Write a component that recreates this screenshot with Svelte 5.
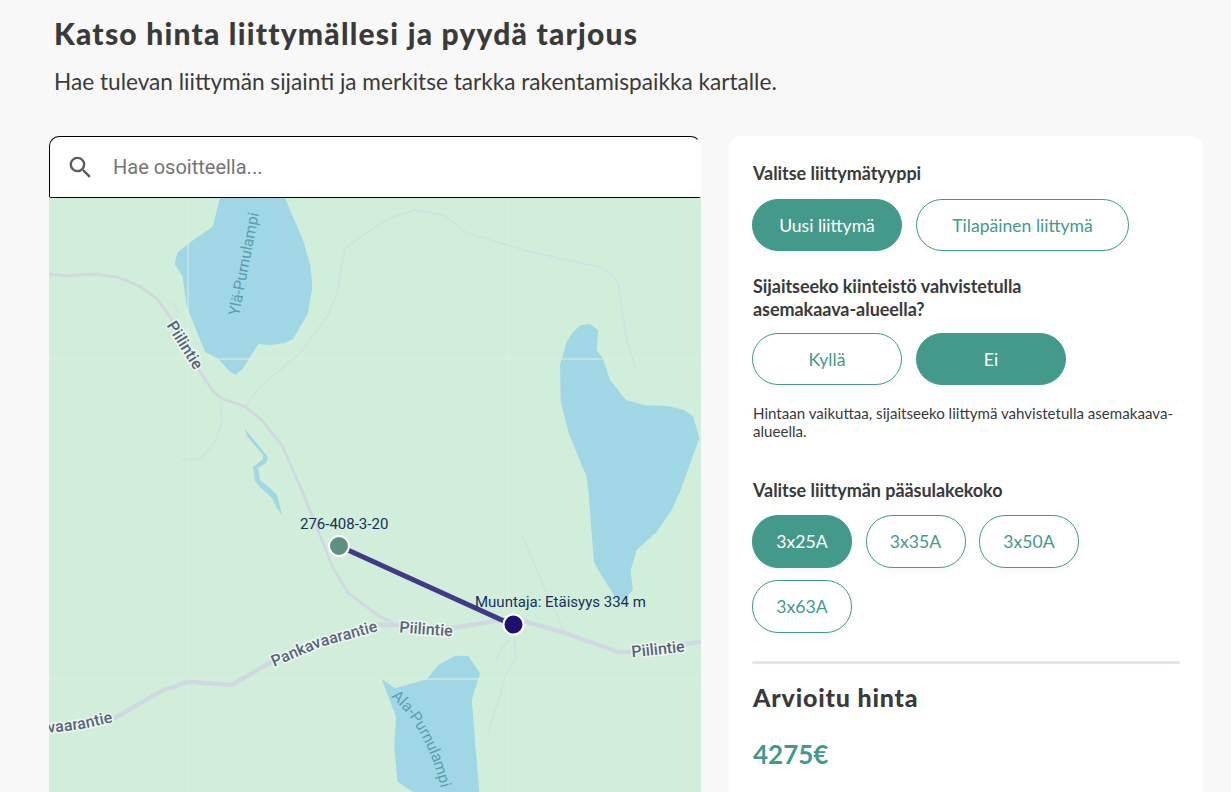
<script>
	let type = $state('Uusi liittymä');
	let zoned = $state('Ei');
	let fuse = $state('3x25A');

	const types = ['Uusi liittymä', 'Tilapäinen liittymä'];
	const zonedOptions = ['Kyllä', 'Ei'];
	const fuses = ['3x25A', '3x35A', '3x50A', '3x63A'];

	const lakes = [
		'M220 198L212.7 226.7L189 243L177.3 252.7L174.7 264L182.7 277L186.7 306.7L205 351.7L218.3 359L230 371.7L236 374.7L243 368.3L258.3 344L270 345L285 343L293 339L307.7 314L312.3 288.3L310.7 266.7L303 240L285 198Z',
		'M560 365L566.7 341.7L573.3 331.7L580.7 325L590 324L598 330L596.7 350L602.7 358.3L610 380L626 400L645 405.3L667.7 406L684.3 410L693.3 416.7L699.3 438.3L680.7 490L671.7 510L656.7 531.7L636.7 550L630.7 570L632.7 590L623 601.7L615 596.7L600 573L594 561.7L588.3 490L586.7 476.7L569.3 435L560.7 401.7Z',
		'M381.7 679L395 688.3L426.7 679.3L438.3 665L455 655.7L468.3 656L480 673.3L471.7 700L479.3 792L413 792L397.3 781.7L394.3 746.7L396 716.7Z',
		'M245 429L268 457L266 463L258 468L260 480L270 488L277 495L282 515L278 510L272 498L262 489L255 481L253 467L263 459L263 455L247 436Z'
	];

	const tracks = [
		'M245 406L261.7 385L300 353.3L328.3 315L336.7 293.3L345 248.3L370 230.7L390 218L415 210L443.3 215L466.7 232.7L530 251.7L600 267.3L612 274L618 283L626 336.7L635.7 369.3',
		'M172.7 300.7L178.3 313.3L175 321.7',
		'M220 400L222.7 420L215 441.7L201 458.3L181.7 460',
		'M514.3 636.7L515.7 658.3L506.7 673.3L487.7 734.3',
		'M511.7 638L500 650L495.7 661.7',
		'M521.7 534L546.7 593.3L565 633'
	];

	const roads = [
		'M49 274L66.7 275.7L93.3 274L118.3 277.3L140 286.7L156.7 298.3L173.3 321.7L196.7 366.7L213.3 391.7L221.7 398.3L245 406.7L261.7 420L281.7 445L301.7 490L323.3 543.3L333.3 568.3L348.3 593.3L380 616.7L396.7 625',
		'M111.7 720L160 691.7L188 681.7L231.7 685L271.7 661.7L320 640L376.7 625L396.7 625L453 628L513 618L565 633L618 652L630 652L701 641.7'
	];
</script>

<main class="page">
	<header class="intro">
		<h1>Katso hinta liittymällesi ja pyydä tarjous</h1>
		<p>Hae tulevan liittymän sijainti ja merkitse tarkka rakentamispaikka kartalle.</p>
	</header>

	<div class="columns">
		<section class="map-col">
			<div class="search">
				<svg class="search-icon" viewBox="0 0 24 24" width="29" height="29" aria-hidden="true">
					<path d="M15.5 14h-.79l-.28-.27A6.471 6.471 0 0 0 16 9.5 6.5 6.5 0 1 0 9.5 16c1.61 0 3.09-.59 4.23-1.57l.27.28v.79l5 4.99L20.49 19l-4.99-5zm-6 0C7.01 14 5 11.99 5 9.5S7.01 5 9.5 5 14 7.01 14 9.5 11.99 14 9.5 14z" />
				</svg>
				<input type="text" placeholder="Hae osoitteella..." />
			</div>

			<svg class="map" viewBox="49 198 652 594" width="652" height="594">
				<defs>
					<path id="pank" d="M274 667L320 647L378 631" />
					<path id="pank2" d="M49 733L82 729L113 722" />
					<path id="ala" d="M391 697Q426 727 441 788" />
				</defs>
				<rect x="49" y="198" width="652" height="594" fill="#d1eedb" />
				{#each lakes as d}
					<path {d} fill="#a0d7e4" />
				{/each}
				<path class="seam" d="M188 198V792M508 198V792M49 359H701M49 679H701" />
				{#each tracks as d}
					<path {d} class="track" />
				{/each}
				<path d={roads[0]} class="road" />
				<path d={roads[1]} class="road wide" />

				<text class="lake-name" transform="translate(244 264) rotate(-79)" text-anchor="middle" dominant-baseline="central">Ylä-Purnulampi</text>
				<text class="lake-name"><textPath href="#ala">Ala-Purnulampi</textPath></text>
				<text class="road-name" transform="translate(185 345) rotate(58)" text-anchor="middle" dominant-baseline="central">Piilintie</text>
				<text class="road-name"><textPath href="#pank">Pankavaarantie</textPath></text>
				<text class="road-name"><textPath href="#pank2" startOffset="100%" text-anchor="end">Pankavaarantie</textPath></text>
				<text class="road-name" transform="translate(426 629) rotate(4)" text-anchor="middle" dominant-baseline="central">Piilintie</text>
				<text class="road-name" transform="translate(658 649) rotate(-6)" text-anchor="middle" dominant-baseline="central">Piilintie</text>

				<line x1="339" y1="546" x2="513" y2="625" class="link" />
				<circle cx="339" cy="546" r="10" fill="#5c9080" class="pin" />
				<circle cx="513.5" cy="624.5" r="10" fill="#1f1070" class="pin" />
				<text class="pin-label" x="300" y="529">276-408-3-20</text>
				<text class="pin-label" x="475" y="606.5">Muuntaja: Etäisyys 334 m</text>
			</svg>
		</section>

		<aside class="panel">
			<h2 class="label">Valitse liittymätyyppi</h2>
			<div class="options first">
				{#each types as t}
					<button class={['opt', t === types[0] ? 'w150' : 'w213', { on: type === t }]} onclick={() => (type = t)}>{t}</button>
				{/each}
			</div>

			<h2 class="label second">Sijaitseeko kiinteistö vahvistetulla<br />asemakaava-alueella?</h2>
			<div class="options zoned">
				{#each zonedOptions as z}
					<button class={['opt', 'w150', { on: zoned === z }]} onclick={() => (zoned = z)}>{z}</button>
				{/each}
			</div>
			<p class="hint">Hintaan vaikuttaa, sijaitseeko liittymä vahvistetulla asemakaava-alueella.</p>

			<h2 class="label third">Valitse liittymän pääsulakekoko</h2>
			<div class="options fuses">
				{#each fuses as f}
					<button class={['opt', 'w100', { on: fuse === f }]} onclick={() => (fuse = f)}>{f}</button>
				{/each}
			</div>

			<hr />

			<h3>Arvioitu hinta</h3>
			<div class="price">4275€</div>
		</aside>
	</div>
</main>

<style>
	:global(body) {
		background: #f8f8f8;
		overflow: hidden;
	}

	.page {
		height: 792px;
		overflow: hidden;
		box-sizing: border-box;
		padding: 0 28px 0 49px;
		font-family: Lato, sans-serif;
		color: #3a3a3a;
	}

	.intro {
		padding: 15px 0 0 5px;
		height: 136px;
		box-sizing: border-box;
	}

	h1 {
		margin: 0;
		font-family: Lato, sans-serif;
		font-size: 30px;
		line-height: 36px;
		font-weight: 900;
		letter-spacing: 1.2px;
	}

	.intro p {
		margin: 16px 0 0;
		font-size: 22.63px;
		line-height: 30px;
	}

	.columns {
		display: grid;
		grid-template-columns: 652px 474px;
		gap: 28px;
		align-items: start;
	}

	.search {
		display: flex;
		align-items: center;
		gap: 18px;
		height: 62px;
		box-sizing: border-box;
		padding-left: 16px;
		background: #fff;
		border: 1px solid #000;
		border-right-color: transparent;
		border-radius: 10px 10px 2px 2px;
	}

	.search-icon {
		fill: #5c5c5c;
		flex: none;
	}

	input {
		flex: 1;
		border: 0;
		outline: 0;
		padding: 0;
		background: none;
		font-family: Roboto, sans-serif;
		font-size: 20px;
	}

	input::placeholder {
		color: #757575;
	}

	.map {
		display: block;
	}

	.seam {
		stroke: #d9efe1;
		stroke-width: 1;
		fill: none;
	}

	.track {
		fill: none;
		stroke: #d3e0e3;
		stroke-width: 1.5;
	}

	.road {
		fill: none;
		stroke: #d0d9e0;
		stroke-width: 3;
		stroke-linejoin: round;
	}

	.road.wide {
		stroke-width: 4.5;
	}

	.lake-name {
		font-family: Roboto, sans-serif;
		font-size: 15.5px;
		fill: #5a9eae;
	}

	.road-name {
		font-family: Roboto, sans-serif;
		font-size: 16px;
		font-weight: 500;
		fill: #566478;
		stroke: #eef6f2;
		stroke-width: 3px;
		paint-order: stroke;
	}

	.link {
		stroke: #423a87;
		stroke-width: 5;
	}

	.pin {
		stroke: #fff;
		stroke-width: 2;
	}

	.pin-label {
		font-family: Roboto, sans-serif;
		font-size: 15px;
		fill: #14305c;
	}

	.panel {
		background: #fff;
		border-radius: 12px;
		padding: 26px 23px 40px 24px;
		height: 700px;
		box-sizing: border-box;
	}

	.label {
		margin: 0;
		font-size: 18px;
		line-height: 23px;
		font-weight: 700;
		letter-spacing: -0.05px;
		color: #3a3a3a;
	}

	.second {
		margin-top: 24px;
	}

	.third {
		margin-top: 39px;
	}

	.options {
		display: flex;
		flex-wrap: wrap;
		gap: 14px;
		margin: 14px 0 0 -1px;
	}

	.options.zoned {
		margin-top: 12px;
	}

	.fuses {
		gap: 12px 13.5px;
		margin-top: 13px;
		max-width: 380px;
	}

	.opt {
		height: 52px;
		box-sizing: border-box;
		border: 1.5px solid #439a8b;
		border-radius: 26px;
		background: #fff;
		color: #439a8b;
		font-family: Lato, sans-serif;
		font-size: 17.6px;
		box-shadow: 0 2px 6px rgba(0, 0, 0, 0.04);
		cursor: pointer;
	}

	.fuses .opt {
		height: 53px;
	}

	.w100 {
		width: 100px;
	}

	.w150 {
		width: 150px;
	}

	.w213 {
		width: 213px;
	}

	.opt.on {
		background: #439a8b;
		color: #fff;
	}

	.hint {
		margin: 19px 0 0;
		font-size: 15.1px;
		line-height: 18px;
	}

	hr {
		margin: 28px 0 0 -1px;
		height: 3px;
		border: 0;
		background: #e2e5f0;
		border-radius: 2px;
		width: 428px;
	}

	h3 {
		margin: 17px 0 0;
		font-family: Lato, sans-serif;
		font-size: 25px;
		line-height: 32px;
		font-weight: 900;
		letter-spacing: 0.8px;
	}

	.price {
		margin-top: 23px;
		font-size: 26px;
		line-height: 36px;
		font-weight: 700;
		color: #439a8b;
	}
</style>
